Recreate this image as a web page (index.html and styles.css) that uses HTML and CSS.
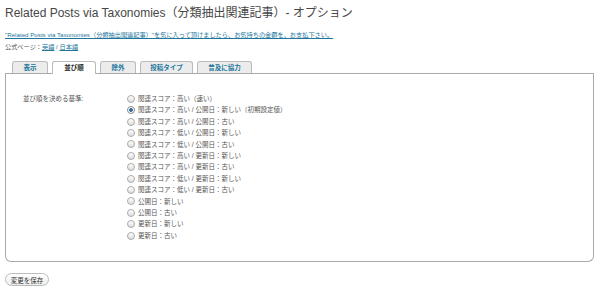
FILE: index.html
```html
<!DOCTYPE html>
<html lang="ja">
<head>
  <meta charset="UTF-8" />
  <title>Related Posts via Taxonomies - オプション</title>
  <link rel="stylesheet" href="styles.css">
</head>
<body>
  <div class="wrap">
    <h2 class="page-title">Related Posts via Taxonomies（分類抽出関連記事）- オプション</h2>
    <p class="donate"><a href="#">"Related Posts via Taxonomies（分類抽出関連記事）"を気に入って頂けましたら、お気持ちの金額を、お支払下さい。</a></p>
    <p class="official">公式ページ：<a href="#">英語</a> / <a href="#">日本語</a></p>

    <div class="tabs">
      <a href="#" class="tab">表示</a>
      <a href="#" class="tab active">並び順</a>
      <a href="#" class="tab">除外</a>
      <a href="#" class="tab">投稿タイプ</a>
      <a href="#" class="tab">普及に協力</a>
    </div>

    <div class="panel">
      <div class="form-row">
        <div class="form-label">並び順を決める基準:</div>
        <div class="options">
          <label><input type="radio" name="order"> 関連スコア：高い（速い）</label>
          <label><input type="radio" name="order" checked> 関連スコア：高い / 公開日：新しい（初期設定値）</label>
          <label><input type="radio" name="order"> 関連スコア：高い / 公開日：古い</label>
          <label><input type="radio" name="order"> 関連スコア：低い / 公開日：新しい</label>
          <label><input type="radio" name="order"> 関連スコア：低い / 公開日：古い</label>
          <label><input type="radio" name="order"> 関連スコア：高い / 更新日：新しい</label>
          <label><input type="radio" name="order"> 関連スコア：高い / 更新日：古い</label>
          <label><input type="radio" name="order"> 関連スコア：低い / 更新日：新しい</label>
          <label><input type="radio" name="order"> 関連スコア：低い / 更新日：古い</label>
          <label><input type="radio" name="order"> 公開日：新しい</label>
          <label><input type="radio" name="order"> 公開日：古い</label>
          <label><input type="radio" name="order"> 更新日：新しい</label>
          <label><input type="radio" name="order"> 更新日：古い</label>
        </div>
      </div>
    </div>

    <button class="save">変更を保存</button>
  </div>
</body>
</html>
```

FILE: styles.css
```css
body {
  margin: 0;
  background: #fff;
  color: #555;
  font-family: "Liberation Sans", "Noto Sans CJK JP", sans-serif;
}

.wrap {
  padding: 0 6px 0 5px;
}

.page-title {
  margin: 0;
  padding-top: 5px;
  font-size: 12px;
  line-height: 16px;
  font-weight: normal;
  color: #464646;
}

.donate {
  margin: 9px 0 0;
  font-size: 6.2px;
  line-height: 10px;
}

.donate a,
.official a {
  color: #21759b;
}

.official {
  margin: 2px 0 0;
  font-size: 6.2px;
  line-height: 10px;
}

.tabs {
  display: flex;
  gap: 4px;
  margin-top: 9px;
  padding-left: 7px;
  border-bottom: 1px solid #aaa;
  height: 12px;
}

.tab {
  display: block;
  height: 12px;
  box-sizing: border-box;
  border: 1px solid #bbb;
  border-bottom: none;
  border-radius: 3px 3px 0 0;
  background: #ececec;
  color: #21759b;
  font-size: 6.5px;
  font-weight: bold;
  line-height: 11px;
  text-align: center;
  text-decoration: none;
}

.tab:nth-child(1) { width: 36px; }
.tab:nth-child(2) { width: 44px; }
.tab:nth-child(3) { width: 36px; }
.tab:nth-child(4) { width: 53px; }
.tab:nth-child(5) { width: 55px; }

.tab.active {
  background: #fff;
  color: #222;
  height: 13px;
}

.panel {
  border: 1px solid #aaa;
  border-top: none;
  border-radius: 0 0 6px 6px;
  height: 187px;
}

.form-row {
  display: flex;
  padding: 19px 0 0 17px;
}

.form-label {
  width: 104px;
  font-size: 6.5px;
  line-height: 11.4px;
}

.options {
  display: flex;
  flex-direction: column;
}

.options label {
  display: flex;
  align-items: center;
  gap: 3px;
  font-size: 6.5px;
  line-height: 11.4px;
}

.options input {
  appearance: none;
  margin: 0;
  width: 8px;
  height: 8px;
  border: 1px solid #aaa;
  border-radius: 50%;
  background: linear-gradient(#fff, #ddd);
  box-sizing: border-box;
}

.options input:checked {
  background: radial-gradient(circle, #3a6ea5 0 1.6px, #fff 2.2px);
  border-color: #888;
}

.save {
  display: block;
  margin-top: 11px;
  width: 44px;
  height: 13px;
  padding: 0;
  border: 1px solid #bbb;
  border-radius: 7px;
  background: linear-gradient(#fff, #eee);
  font-family: "Liberation Sans", "Noto Sans CJK JP", sans-serif;
  font-size: 6.5px;
  color: #333;
}
```
